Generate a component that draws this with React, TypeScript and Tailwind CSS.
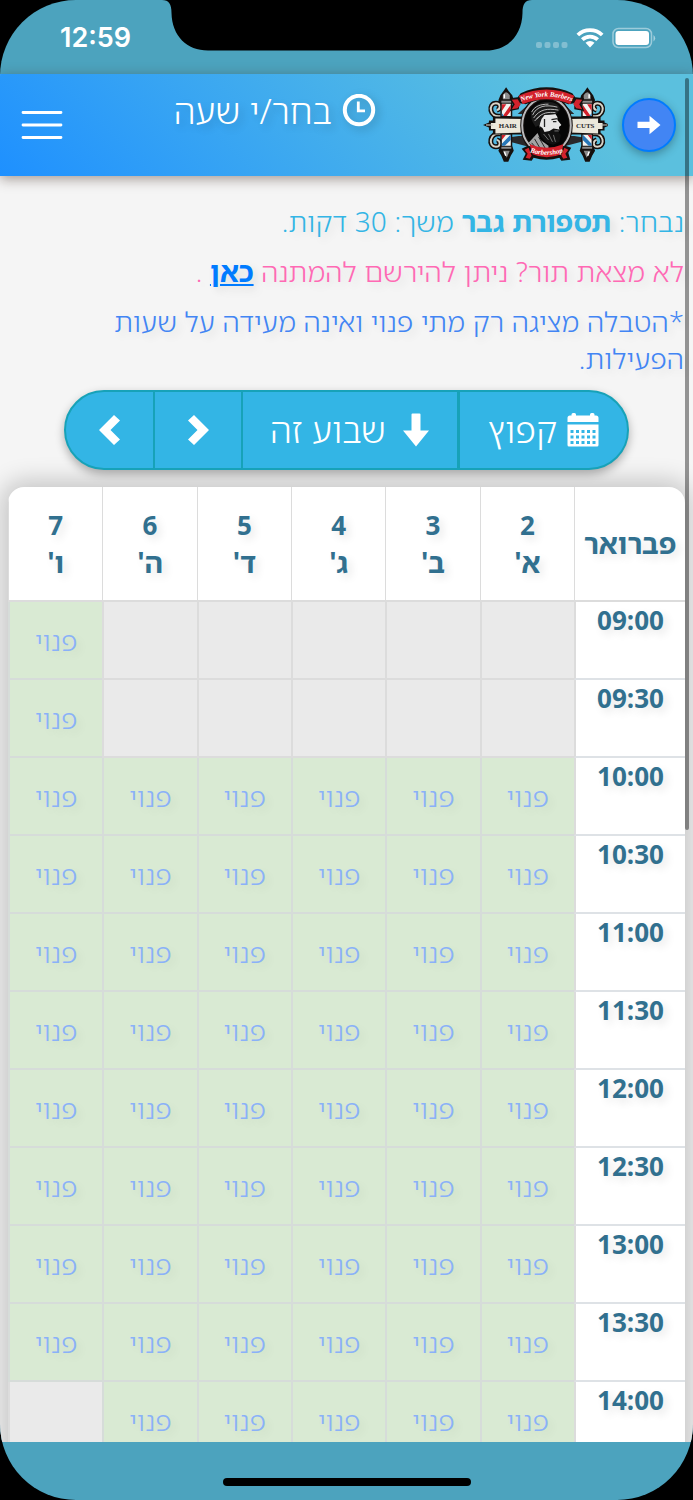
import { useState } from "react";

interface Day {
  closed: string[];
  date: number;
  name: string;
}

const times = ["09:00", "09:30", "10:00", "10:30", "11:00", "11:30", "12:00", "12:30", "13:00", "13:30", "14:00"];

const weekdayClosed = ["09:00", "09:30"];

const days: Day[] = [
  { closed: weekdayClosed, date: 2, name: "א'" },
  { closed: weekdayClosed, date: 3, name: "ב'" },
  { closed: weekdayClosed, date: 4, name: "ג'" },
  { closed: weekdayClosed, date: 5, name: "ד'" },
  { closed: weekdayClosed, date: 6, name: "ה'" },
  { closed: ["14:00"], date: 7, name: "ו'" }
];

export default function App(): React.ReactElement {
  return (
    <div className="h-screen bg-black font-['Noto_Sans_Hebrew','Open_Sans',sans-serif]">
      <div className="flex h-full flex-col overflow-hidden rounded-[76px] bg-[#4ca3be]">
        <StatusBar />
        <div className="relative flex min-h-0 flex-1 flex-col bg-[#f5f5f5]" dir="rtl">
          <Header />
          <main className="min-h-0 flex-1 overflow-hidden">
            <Notes />
            <WeekNav />
            <Schedule />
          </main>
          <div className="absolute top-1 right-1 z-20 h-[55%] w-1 rounded-full bg-black/40" />
        </div>
        <footer className="flex h-[58px] shrink-0 items-end justify-center pb-3.5">
          <div className="h-2 w-[248px] rounded-full bg-black" />
        </footer>
      </div>
    </div>
  );
}

function StatusBar(): React.ReactElement {
  return (
    <div className="grid h-[74px] shrink-0 grid-cols-[1fr_370px_1fr] text-white">
      <div className="pt-5 pl-[60px] font-['Inter',sans-serif] text-[27px] leading-9 font-semibold">12:59</div>
      <svg className="h-[51px] w-[370px]" viewBox="0 0 370 51">
        <path d="M0 0C7 0 9.500 4 9.500 13C10 36 25 50.500 46 50.500H324C345 50.500 360 36 360.500 13C360.500 4 363 0 370 0Z" fill="#000" />
      </svg>
      <div className="flex items-start gap-2 pt-[27px] pl-1">
        <svg className="h-[22px] w-8" viewBox="0 0 32 22">
          <g fill="#fff" fillOpacity=".3">
            <rect height="6" rx="2" width="6" x="0" y="15" />
            <rect height="6" rx="2" width="6" x="8.500" y="15" />
            <rect height="6" rx="2" width="6" x="17" y="15" />
            <rect height="6" rx="2" width="6" x="25.500" y="15" />
          </g>
        </svg>
        <svg className="h-[22px] w-7" viewBox="0 0 28 22">
          <g fill="none" stroke="#fff" strokeWidth="3.800">
            <path d="M1.800 8A17.500 17.500 0 0 1 26.200 8" />
            <path d="M6.300 12.700A11 11 0 0 1 21.700 12.700" />
          </g>
          <path d="M14 20.500L9.500 15.800A6.500 6.500 0 0 1 18.500 15.800Z" fill="#fff" />
        </svg>
        <svg className="h-[22px] w-11" viewBox="0 0 44 22">
          <rect fill="none" height="19" rx="5.500" stroke="#fff" strokeOpacity=".45" strokeWidth="1.500" width="38.500" x="1" y="1.500" />
          <rect fill="#fff" height="14" rx="3" width="33.500" x="3.500" y="4" />
          <path d="M41.500 8A4 4 0 0 1 41.500 14.500Z" fill="#fff" fillOpacity=".5" />
        </svg>
      </div>
    </div>
  );
}

function Header(): React.ReactElement {
  return (
    <header className="relative z-10 flex h-[102px] shrink-0 items-center bg-linear-45 from-[#1e90ff] to-[#5bc0de] to-80% pr-[17px] pl-[21px] shadow-[0_3px_12px_rgba(60,40,30,0.45)]">
      <button
        aria-label="חזרה"
        className="flex size-[54px] items-center justify-center rounded-full border-2 border-[#007bff] bg-[#4285f4] text-white shadow-[0_3px_10px_rgba(0,0,0,0.3)]"
        type="button"
      >
        <svg className="h-5 w-6" viewBox="0 0 24 20">
          <path d="M.5 6.800H12.500V.8L23.500 10L12.500 19.200V13H.5Z" fill="currentColor" />
        </svg>
      </button>
      <Logo />
      <h1 className="flex flex-1 items-center justify-center gap-2.5 self-start pt-3.5 pl-1 text-[35px] leading-[46px] font-[350] text-white [text-shadow:4px_4px_8px_rgba(0,0,0,0.16)]">
        <svg className="size-[34px] drop-shadow-[3px_3px_4px_rgba(0,0,0,0.2)]" fill="none" stroke="currentColor" viewBox="0 0 34 34">
          <circle cx="17" cy="16" r="14.200" strokeWidth="4" />
          <path d="M16.300 7.500V16.800H23" strokeWidth="2.800" />
        </svg>
        בחר/י שעה
      </h1>
      <button aria-label="תפריט" className="text-white" type="button">
        <svg className="h-8 w-[42px]" stroke="currentColor" strokeLinecap="round" strokeWidth="2.800" viewBox="0 0 42 32">
          <path d="M2 3.500H40M2 16H40M2 28.500H40" />
        </svg>
      </button>
    </header>
  );
}

function Notes(): React.ReactElement {
  return (
    <section className="flex flex-col gap-[13px] pt-[27px] pr-[9px] pl-10 text-[28px] leading-[37px] font-[350] [text-shadow:4px_4px_8px_rgba(0,0,0,0.1)]">
      <p className="text-[#33b5e5]">
        נבחר: <b className="font-bold">תספורת גבר</b> משך: 30 דקות.
      </p>
      <p className="text-[#ff69b4]">
        לא מצאת תור? ניתן להירשם להמתנה{" "}
        <a className="font-bold text-[#007bff] underline" href="#waitlist">
          כאן
        </a>{" "}
        .
      </p>
      <p className="text-[#4285f4]">*הטבלה מציגה רק מתי פנוי ואינה מעידה על שעות הפעילות.</p>
    </section>
  );
}

function WeekNav(): React.ReactElement {
  return (
    <nav className="mt-[13px] flex justify-center text-[35px] font-[350] text-white">
      <div className="flex h-20 overflow-hidden rounded-full border-2 border-[#17a2b8] bg-[#33b5e5] shadow-[0_4px_10px_rgba(0,0,0,0.3)]">
        <button className="flex w-[170px] items-center justify-center gap-2.5 border-l-[3px] border-[#17a2b8]" type="button">
          <svg className="h-[34px] w-8" viewBox="0 0 32 34">
            <path d="M3 2.500H4.500V1.500Q4.500 0 6 0H7.500Q9 0 9 1.500V2.500H23V1.500Q23 0 24.500 0H26Q27.500 0 27.500 1.500V2.500H29Q31.500 2.500 31.500 5V9H.5V5Q.5 2.500 3 2.500Z" fill="currentColor" />
            <path d="M.5 11.500H31.500V32Q31.500 33.500 30 33.500H2Q.5 33.500 .5 32Z" fill="currentColor" />
            <path
              d="M3.500 18.500H28.500M3.500 24H28.500M3.500 29.500H28.500"
              fill="none"
              stroke="#33b5e5"
              strokeDasharray="3 2.500"
              strokeWidth="3"
            />
          </svg>
          קפוץ
        </button>
        <button className="flex w-[216px] items-center justify-center gap-4 border-l-2 border-[#17a2b8]" type="button">
          <svg className="h-[34px] w-7" viewBox="0 0 28 34">
            <path d="M10.500 .5H17.500Q18.500 .5 18.500 1.500V17.500H27L14 33.500L1 17.500H9.500V1.500Q9.500 .5 10.500 .5Z" fill="currentColor" />
          </svg>
          שבוע זה
        </button>
        <button aria-label="השבוע הבא" className="flex w-[88px] items-center justify-center border-l-2 border-[#17a2b8]" type="button">
          <svg className="h-8 w-6" viewBox="0 0 24 32">
            <path d="M8 1L23 16L8 31L2 25.500L11.500 16L2 6.500Z" fill="currentColor" />
          </svg>
        </button>
        <button aria-label="השבוע הקודם" className="flex w-[87px] items-center justify-center" type="button">
          <svg className="h-8 w-6" viewBox="0 0 24 32">
            <path d="M16 1L1 16L16 31L22 25.500L12.500 16L22 6.500Z" fill="currentColor" />
          </svg>
        </button>
      </div>
    </nav>
  );
}

function Schedule(): React.ReactElement {
  const [selected, setSelected] = useState<string | null>(null);

  return (
    <div className="mx-2 mt-[17px] overflow-hidden rounded-t-2xl bg-white shadow-[0_0_24px_6px_rgba(0,0,0,0.2)]">
      <table className="w-full table-fixed border-separate border-spacing-0 text-center text-[28px] leading-[37px]">
        <colgroup>
          <col className="w-[111px]" />
          {days.map((day) => (
            <col key={day.date} />
          ))}
        </colgroup>
        <thead>
          <tr className="h-[115px] font-bold text-[#31708f] [text-shadow:4px_4px_8px_rgba(0,0,0,0.1)]">
            <th className="border-b-2 border-l border-[#dcdcdc]" scope="col">
              פברואר
            </th>
            {days.map((day) => (
              <th className="border-b-2 border-l border-[#dcdcdc]" key={day.date} scope="col">
                <span className="block font-['Open_Sans',sans-serif] text-[26px]">{day.date}</span>
                {day.name}
              </th>
            ))}
          </tr>
        </thead>
        <tbody>
          {times.map((time) => (
            <tr className="h-[78px]" key={time}>
              <th
                className="border-b-2 border-l-2 border-b-[#dee2e6] border-l-[#dcdcdc] align-top font-['Open_Sans',sans-serif] text-[26px] font-bold text-[#31708f] [text-shadow:4px_4px_8px_rgba(0,0,0,0.1)]"
                scope="row"
              >
                {time}
              </th>
              {days.map((day) => {
                const slot = `${day.date}-${time}`;

                return day.closed.includes(time) ? (
                  <td className="border-b-2 border-l-2 border-[#dcdcdc] bg-[#eaeaea]" key={slot} />
                ) : (
                  <td className="border-b-2 border-l-2 border-[#d6dcd9] bg-[#d9ead3] p-0" key={slot}>
                    <button
                      aria-pressed={selected === slot}
                      className="h-[76px] w-full font-[350] text-[#8ab1f8] [text-shadow:4px_4px_8px_rgba(0,0,0,0.08)] aria-pressed:bg-[#c3deb9]"
                      onClick={() => setSelected(slot)}
                      type="button"
                    >
                      פנוי
                    </button>
                  </td>
                );
              })}
            </tr>
          ))}
        </tbody>
      </table>
    </div>
  );
}

function Pole(): React.ReactElement {
  return (
    <g>
      <g fill="none" stroke="#15100e" strokeWidth="5">
        <path d="M18 30C6 32 5 17 13 17C18 17 18 23 14 24M18 48C6 46 5 61 13 61C18 61 18 55 14 54" />
      </g>
      <g fill="none" stroke="#d9d4c8" strokeWidth="2">
        <path d="M18 30C6 32 5 17 13 17C18 17 18 23 14 24M18 48C6 46 5 61 13 61C18 61 18 55 14 54" />
      </g>
      <path d="M23.300 1L26 5L29.500 9L31 14L29.500 18V60L31 65L28 70L25.500 76H21L18.500 70L15.500 65L17.500 60V18L15.500 14L17.500 9L20.500 5Z" fill="#15100e" />
      <path d="M20 9Q23 3 27 9V13H20ZM18.500 14.500H28.500V16.500H18.500ZM18.500 61H28.500V63H18.500ZM20 65H27L24 72Z" fill="#8c8c8c" />
      <path d="M21.500 8V12M21.500 66L23 70" stroke="#fff" strokeWidth="1.500" />
      <path d="M19 17.500H28V30H19ZM19 48.500H28V60H19Z" fill="#f3f3f0" />
      <path d="M19 18H23.500L19 25ZM28 18.500V25L24 30H20ZM19 49H23L19 54Z" fill="#d3222c" />
      <path d="M19 27V30H21ZM28 48.500V54L22 60H19V58Z" fill="#2777b8" />
      <path d="M0 39L6 36.500V34.500H10V30.500H42V48.500H10V44.500H6V41.500Z" fill="#15100e" />
      <path d="M12.500 32.500L42 33V46.500L12.500 47.500V43H8V37H12.500Z" fill="#ece8db" />
      <path d="M3 39H10" stroke="#cfcac0" strokeWidth="1.200" />
    </g>
  );
}

function Logo(): React.ReactElement {
  return (
    <svg aria-label="New York Barbers Barbershop" className="mr-3.5 h-[78px] w-[125px]" role="img" viewBox="0 0 126 78">
      <path d="M36 50L16 53L46 61H80L110 53L92 50ZM35 28L46 18H82L92 28Z" fill="#29282a" />
      <Pole />
      <g transform="translate(128.500 0) scale(-1 1)">
        <Pole />
      </g>
      <ellipse cx="64" cy="39.500" fill="#15100e" rx="26.500" ry="31" />
      <ellipse cx="64" cy="39.500" fill="none" rx="24.500" ry="28" stroke="#b9b9bb" strokeWidth="2" />
      <ellipse cx="64" cy="39.500" fill="#050505" rx="22.500" ry="25.500" />
      <path d="M57 33L60 29L73 28L75 31V34L79 39L76.500 41L77 44L74 48L66 49L60 47L57 41Z" fill="#e6e6e6" />
      <path d="M50 36C46 27 50 19 59 16.500C68 14 77 17 78 23L74 28L62 29L59 33L57 39L53 41Z" fill="#1b1b1b" />
      <path d="M50 29C54 20 63 18 75 21M51 32C57 23 65 22 76 24M54 33C60 26 66 26 73 26.500M49 26C52 20 58 18 66 18M52 35L57 30" fill="none" stroke="#c9c9c9" strokeWidth=".9" />
      <path d="M57 40L60 42L62 46L67 45L71 42.500L77 43.500L76 46L78.500 49L77 56L71 59L64 57L58 50Z" fill="#111" />
      <path d="M61 48L66 54M66 48L70 56M71 49L73 56M72 45H76" stroke="#8a8a8a" strokeWidth=".8" />
      <path d="M69 33.500L75 32.500M70.500 35.500H74M62 33V41" stroke="#222" strokeWidth="1.300" />
      <path d="M46 57L55 47L58 54L66 60V66L56 65Z" fill="#a3a3a3" />
      <path d="M52 53L59 65M49 57L55 64M56 51L63 63" stroke="#252525" strokeWidth="1" />
      <path d="M27 12L35 11L38 7Q64 -5 90 7L93 11L102 12L99 18L102 25L92 23V17L86 18Q64 9 43 18L37 17L36 23L27 25L30 18Z" fill="#15100e" />
      <path d="M36 9.500Q64 -3 92 9.500L88 18Q64 8 40 18ZM29 13.500L35 13L38 18L35 22L29 23L32 18ZM100 13.500L94 13L91 18L94 22L100 23L97 18Z" fill="#d3222c" />
      <path d="M39 63L45 60Q64 65 83 60L89 62L86 67L88 74L79 75L77 72Q64 76 51 72L49 75L40 74L43 68Z" fill="#15100e" />
      <path d="M47 58.500Q64 65.500 81 58.500L79 68.500Q64 74.500 50 68.500ZM42 64L46 62L49 70L47 73L43 72L45 68ZM86 64L82 62L79 70L81 73L85 72L83 68Z" fill="#d3222c" />
      <defs>
        <path d="M36 16.500Q64 4 92 16.500" id="name-arc" />
        <path d="M46 66Q64 72 82 66" id="shop-arc" />
      </defs>
      <g fill="#fff" fontFamily="'Liberation Serif', serif" fontStyle="italic" fontWeight="700" textAnchor="middle">
        <text fontSize="7">
          <textPath href="#name-arc" startOffset="50%">New York Barbers</textPath>
        </text>
        <text fontSize="7">
          <textPath href="#shop-arc" startOffset="50%">Barbershop</textPath>
        </text>
      </g>
      <g fill="#29282a" fontFamily="'Liberation Serif', serif" fontSize="7" fontWeight="700" textAnchor="middle">
        <text x="25" y="42.500">HAIR</text>
        <text x="103" y="42.500">CUTS</text>
      </g>
    </svg>
  );
}
